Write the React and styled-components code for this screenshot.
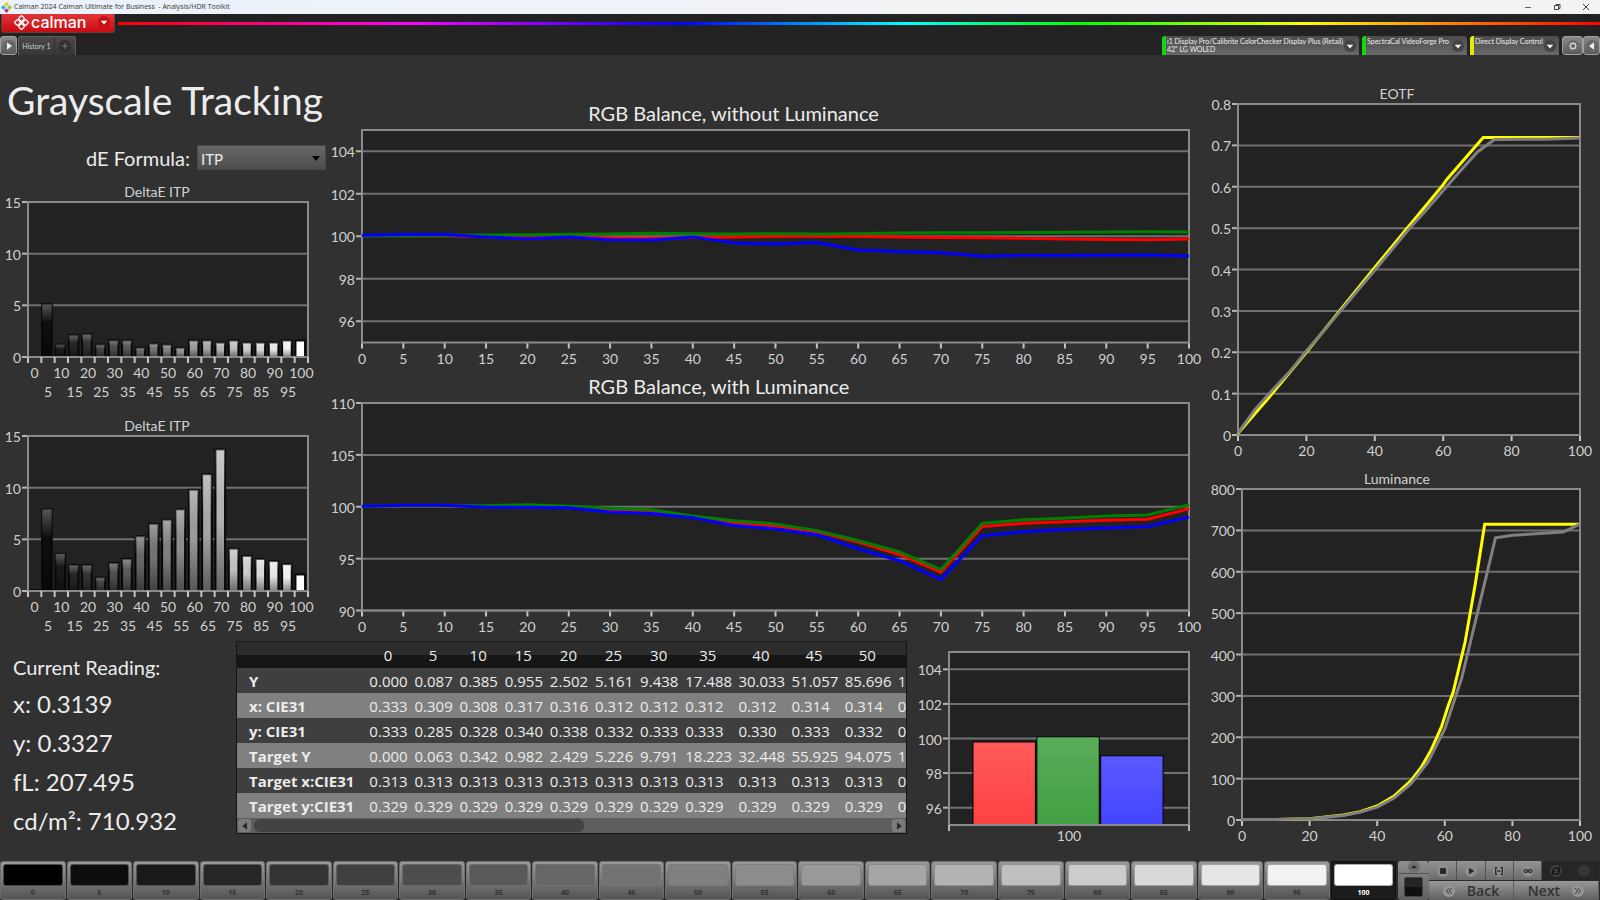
import React from "react";
import styled, { createGlobalStyle } from "styled-components";


const steps = Array.from({ length: 21 }, (_, i) => i * 5);

const deltaWithout = [0, 5.1, 1.2, 2.1, 2.2, 1.2, 1.6, 1.6, 0.9, 1.3, 1.2, 0.9, 1.6, 1.6, 1.4, 1.6, 1.4, 1.4, 1.4, 1.6, 1.6];
const deltaWith = [0.1, 7.9, 3.6, 2.5, 2.5, 1.3, 2.7, 3.1, 5.3, 6.5, 6.9, 7.9, 9.8, 11.3, 13.7, 4.1, 3.4, 3.1, 2.9, 2.6, 1.6];

const every5 = (values) => values.map((v, i) => [i * 5, v]);

const balanceWithout = [
  { color: "#ff0000", points: every5([100.03, 100.03, 100.03, 99.98, 99.96, 99.98, 99.92, 99.91, 99.94, 99.97, 100, 100, 99.99, 99.97, 99.94, 99.93, 99.9, 99.87, 99.85, 99.84, 99.87]) },
  { color: "#008000", points: every5([100.03, 100.04, 100.05, 100.06, 100.07, 100.09, 100.11, 100.14, 100.12, 100.11, 100.12, 100.11, 100.12, 100.15, 100.16, 100.17, 100.18, 100.19, 100.2, 100.21, 100.2]) },
  { color: "#0000ff", points: every5([100.05, 100.08, 100.08, 99.97, 99.88, 99.96, 99.83, 99.82, 99.97, 99.68, 99.64, 99.7, 99.35, 99.28, 99.22, 99.06, 99.1, 99.1, 99.11, 99.12, 99.07]) },
];

const balanceWith = [
  { color: "#ff0000", points: every5([100.03, 100.1, 100.1, 100, 100.05, 99.95, 99.65, 99.5, 99, 98.4, 98.15, 97.6, 96.6, 95.4, 93.7, 98.1, 98.4, 98.55, 98.7, 98.8, 99.8]) },
  { color: "#008000", points: every5([100.03, 100.1, 100.1, 100.1, 100.2, 100.05, 99.85, 99.7, 99.1, 98.65, 98.35, 97.7, 96.75, 95.65, 93.95, 98.4, 98.75, 98.9, 99.1, 99.2, 100.2]) },
  { color: "#0000ff", points: every5([100.05, 100.15, 100.15, 99.95, 99.95, 99.9, 99.5, 99.35, 98.95, 98.2, 97.85, 97.3, 95.95, 94.8, 93, 97.2, 97.6, 97.8, 97.95, 98.1, 99]) },
];

const eotf = [
  { color: "#ffff00", points: [[0, 0.004], [10, 0.1], [20, 0.2], [30, 0.303], [40, 0.405], [50, 0.505], [60, 0.605], [61, 0.617], [71.7, 0.719], [100, 0.719]] },
  { color: "#808080", points: [[0, 0.005], [5, 0.062], [10, 0.108], [15, 0.152], [20, 0.203], [25, 0.251], [30, 0.3], [40, 0.398], [50, 0.498], [55, 0.543], [60, 0.591], [65, 0.638], [70, 0.684], [75, 0.714], [90, 0.715], [100, 0.718]] },
];

const luminance = [
  { color: "#ffff00", points: [[0, 1], [10, 1], [20, 3], [30, 12], [35, 20], [40, 34], [45, 58], [50, 95], [53, 127], [56, 170], [59, 225], [61, 276], [62.5, 310], [66, 430], [69, 570], [71.8, 715], [100, 715]] },
  { color: "#808080", points: [[0, 1], [10, 1], [20, 3], [30, 11], [35, 19], [40, 31], [45, 53], [50, 88], [55, 140], [60, 220], [65, 343], [70, 512], [75, 682], [80, 688], [95, 696], [100, 715]] },
];

const tableHead = ["0", "5", "10", "15", "20", "25", "30", "35", "40", "45", "50", ""];
const tableRows = [
  ["Y", "0.000", "0.087", "0.385", "0.955", "2.502", "5.161", "9.438", "17.488", "30.033", "51.057", "85.696", "1"],
  ["x: CIE31", "0.333", "0.309", "0.308", "0.317", "0.316", "0.312", "0.312", "0.312", "0.312", "0.314", "0.314", "0"],
  ["y: CIE31", "0.333", "0.285", "0.328", "0.340", "0.338", "0.332", "0.333", "0.333", "0.330", "0.333", "0.332", "0"],
  ["Target Y", "0.000", "0.063", "0.342", "0.982", "2.429", "5.226", "9.791", "18.223", "32.448", "55.925", "94.075", "1"],
  ["Target x:CIE31", "0.313", "0.313", "0.313", "0.313", "0.313", "0.313", "0.313", "0.313", "0.313", "0.313", "0.313", "0"],
  ["Target y:CIE31", "0.329", "0.329", "0.329", "0.329", "0.329", "0.329", "0.329", "0.329", "0.329", "0.329", "0.329", "0"],
];

const pct = (v, [min, max]) => ((v - min) / (max - min)) * 100;

function Grid({ yTicks, yDomain }) {
  return (
    <>
      <rect width="100%" height="100%" fill="#222222" />
      {yTicks.map((t) => {
        const y = `${100 - pct(t, yDomain)}%`;
        return (
          <g key={t}>
            <line x1="0" x2="100%" y1={y} y2={y} stroke="#707070" strokeWidth="2" />
            <line x1="-6" x2="0" y1={y} y2={y} stroke="#b4b4b4" strokeWidth="2" />
            <AxisText x="-7" y={y} dy="6" textAnchor="end">{t}</AxisText>
          </g>
        );
      })}
    </>
  );
}

function Frame() {
  return <rect width="100%" height="100%" fill="none" stroke="#8a8a8a" strokeWidth="2" />;
}

function LineChart({ label, series, xTicks, yTicks, yDomain }) {
  return (
    <Plot role="img" aria-label={label}>
      <Grid yTicks={yTicks} yDomain={yDomain} />
      {xTicks.map((t) => (
        <svg key={t} x={`${t}%`} y="100%" overflow="visible">
          <line y2="6" stroke="#c4c4c4" strokeWidth="2" />
          <AxisText y="21" textAnchor="middle">{t}</AxisText>
        </svg>
      ))}
      <Frame />
      <svg width="100%" height="100%" viewBox="0 0 100 100" preserveAspectRatio="none" overflow="visible">
        {series.map((s) => (
          <Curve key={s.color} stroke={s.color} points={s.points.map(([x, y]) => `${x},${100 - pct(y, yDomain)}`).join(" ")} />
        ))}
      </svg>
    </Plot>
  );
}

function DeltaChart({ label, id, values }) {
  const slot = 100 / 21;
  return (
    <Plot role="img" aria-label={label}>
      <defs>
        <linearGradient id={id} x2="0" y2="1">
          <stop offset="0" stopColor="#ffffff" stopOpacity="0.3" />
          <stop offset="0.35" stopColor="#ffffff" stopOpacity="0" />
          <stop offset="0.5" stopColor="#000000" stopOpacity="0" />
          <stop offset="1" stopColor="#000000" stopOpacity="0.45" />
        </linearGradient>
      </defs>
      <Grid yTicks={[0, 5, 10, 15]} yDomain={[0, 15]} />
      {values.map((v, i) => {
        const h = pct(v, [0, 15]);
        const tone = Math.round((i / 20) * 255);
        const box = { x: `${i * slot + slot * 0.06}%`, y: `${100 - h}%`, width: `${slot * 0.72}%`, height: `${h}%` };
        return (
          <g key={i}>
            <rect {...box} fill={`rgb(${tone}, ${tone}, ${tone})`} stroke="#080808" strokeWidth="2" />
            {i < 20 && <rect {...box} fill={`url(#${id})`} />}
          </g>
        );
      })}
      <Frame />
      {steps.map((s, i) => (
        <svg key={s} x={`${i * slot}%`} y="100%" width={`${slot}%`} height="1" overflow="visible">
          <line y2="6" stroke="#c4c4c4" strokeWidth="2" />
          <AxisText x="50%" y={i % 2 ? "40" : "21"} textAnchor="middle">{s}</AxisText>
        </svg>
      ))}
      <svg x="100%" y="100%" overflow="visible">
        <line y2="6" stroke="#c4c4c4" strokeWidth="2" />
      </svg>
    </Plot>
  );
}

const rgbBars = [
  { id: "bar-red", from: "#ff5a5a", to: "#ff4141", value: 99.8 },
  { id: "bar-green", from: "#5aad5a", to: "#41a041", value: 100.1 },
  { id: "bar-blue", from: "#5a5aff", to: "#4444ff", value: 99 },
];

function RgbBars() {
  return (
    <Plot role="img" aria-label="RGB levels at 100">
      <Grid yTicks={[96, 98, 100, 102, 104]} yDomain={[95, 105]} />
      {rgbBars.map((b, i) => {
        const h = pct(b.value, [95, 105]);
        return (
          <g key={b.id}>
            <linearGradient id={b.id} x2="0" y2="1">
              <stop offset="0" stopColor={b.from} />
              <stop offset="1" stopColor={b.to} />
            </linearGradient>
            <rect x={`${10 + i * 26.6}%`} y={`${100 - h}%`} width="26%" height={`${h}%`} fill={`url(#${b.id})`} stroke="#000000" strokeWidth="1" />
          </g>
        );
      })}
      <Frame />
      <svg y="100%" width="100%" height="1" overflow="visible">
        <line y2="6" stroke="#b4b4b4" strokeWidth="2" />
        <AxisText x="50%" y="16" textAnchor="middle">100</AxisText>
      </svg>
      <svg x="100%" y="100%" overflow="visible">
        <line y2="6" stroke="#b4b4b4" strokeWidth="2" />
      </svg>
    </Plot>
  );
}

function AppIcon() {
  return (
    <svg width="11" height="11" viewBox="0 0 12 12" aria-hidden="true">
      <path d="M6 0l2.6 2.6L6 5.2 3.4 2.6z" fill="#f7c600" />
      <path d="M2.6 3.4L5.2 6 2.6 8.6 0 6z" fill="#20b4e8" />
      <path d="M9.4 3.4L12 6 9.4 8.6 6.8 6z" fill="#8ccf3c" />
      <path d="M6 6.8l2.6 2.6L6 12 3.4 9.4z" fill="#e5177b" />
    </svg>
  );
}

function BrandMark() {
  return (
    <svg width="15" height="15" viewBox="0 0 16 16" fill="none" stroke="#fff" strokeWidth="1.4" aria-hidden="true">
      <rect x="5.6" y="1.4" width="4.8" height="4.8" rx="1" transform="rotate(45 8 3.8)" />
      <rect x="5.6" y="9.8" width="4.8" height="4.8" rx="1" transform="rotate(45 8 12.2)" />
      <rect x="1.4" y="5.6" width="4.8" height="4.8" rx="1" transform="rotate(45 3.8 8)" />
      <rect x="9.8" y="5.6" width="4.8" height="4.8" rx="1" transform="rotate(45 12.2 8)" />
      <path d="M8 6l2 2-2 2-2-2z" fill="#fff" stroke="none" />
    </svg>
  );
}

const icons = {
  down: <path d="M2 4.500h8L6 9z" fill="currentColor" />,
  up: <path d="M2 7.500h8L6 3.500z" fill="currentColor" />,
  play: <path d="M3.500 2v8L10 6z" fill="currentColor" />,
  left: <path d="M8.500 1.500v9L2.500 6z" fill="currentColor" />,
  right: <path d="M3.500 1.500v9L9.500 6z" fill="currentColor" />,
  stop: <path d="M2.500 2.500h7v7h-7z" fill="currentColor" />,
  plus: <path d="M6 2.500v7M2.500 6h7" stroke="#8a8a8a" fill="none" />,
  bracket: <path d="M4 2H2v8h2M8 2h2v8H8M4 6h4" stroke="currentColor" strokeWidth="1.500" fill="none" />,
  loop: <path d="M6 6C5 4.200 1.200 3.500 1.200 6S5 7.800 6 6s4.800-2.500 4.800 0S7 7.800 6 6z" stroke="currentColor" strokeWidth="1.300" fill="none" />,
  refresh: <path d="M2 5.500a4 4 0 0 1 7-2l1-1v3H7M10 6.500a4 4 0 0 1-7 2l-1 1v-3h3" stroke="#151515" strokeWidth="1.500" fill="none" />,
  gear: (
    <g stroke="#d0d0d0" fill="none">
      <circle cx="6" cy="6" r="3.200" strokeWidth="1.500" />
      <path d="M6 .8v2M6 9.200v2M.8 6h2M9.200 6h2M2.300 2.300l1.400 1.400M8.300 8.300l1.400 1.400M2.300 9.700l1.400-1.400M8.300 3.700l1.400-1.400" />
    </g>
  ),
  back: <path d="M6 2.500L3 6l3 3.500M9.500 2.500L6.500 6l3 3.500" stroke="currentColor" fill="none" />,
  next: <path d="M2.500 2.500l3 3.500-3 3.500M6 2.500L9 6 6 9.500" stroke="currentColor" fill="none" />,
  none: null,
};

function Icon({ name }) {
  return <svg width="10" height="10" viewBox="0 0 12 12" aria-hidden="true">{icons[name]}</svg>;
}

function App() {
  return (
    <Page>
      <GlobalStyle />
      <TitleBar>
        <AppIcon />
        <TitleText>Calman 2024 Calman Ultimate for Business &nbsp;- Analysis/HDR Toolkit</TitleText>
        <WindowButton aria-label="Minimize"><svg width="8" height="8" viewBox="0 0 8 8"><path d="M1 4.500h6" stroke="#666" fill="none" /></svg></WindowButton>
        <WindowButton aria-label="Restore"><svg width="8" height="8" viewBox="0 0 8 8"><path d="M1.500 2.500h4v4h-4zM3 2.500v-1h4v4H5.500" stroke="#444" fill="none" /></svg></WindowButton>
        <WindowButton aria-label="Close"><svg width="8" height="8" viewBox="0 0 8 8"><path d="M1 1l6 6M7 1L1 7" stroke="#444" fill="none" /></svg></WindowButton>
      </TitleBar>

      <BrandRow>
        <BrandButton>
          <BrandMark />
          <BrandName>calman</BrandName>
          <Round $bg="#c40f14"><Icon name="down" /></Round>
        </BrandButton>
        <Rainbow />
      </BrandRow>

      <TabRow>
        <SquareButton aria-label="Open panel"><Round $bg="#666"><Icon name="right" /></Round></SquareButton>
        <HistoryTabs>
          <HistoryTab>History 1</HistoryTab>
          <AddTab aria-label="Add history"><Round $bg="#303030"><Icon name="plus" /></Round></AddTab>
        </HistoryTabs>
        <Spacer />
        <Device $accent="#12d812" $width="197px">
          <DeviceText>i1 Display Pro/Calibrite ColorChecker Display Plus (Retail)<br />42" LG WOLED</DeviceText>
          <Round $bg="#444"><Icon name="down" /></Round>
        </Device>
        <Device $accent="#12d812" $width="105px">
          <DeviceText>SpectraCal VideoForge Pro</DeviceText>
          <Round $bg="#444"><Icon name="down" /></Round>
        </Device>
        <Device $accent="#e8e800" $width="89px">
          <DeviceText>Direct Display Control</DeviceText>
          <Round $bg="#444"><Icon name="down" /></Round>
        </Device>
        <SquareButton $wide aria-label="Settings"><Round $bg="#666"><Icon name="gear" /></Round></SquareButton>
        <SquareButton aria-label="Collapse"><Round $bg="#666"><Icon name="left" /></Round></SquareButton>
      </TabRow>

      <Main>
        <Workspace>
          <Upper>
            <DeltaColumn>
              <Heading>Grayscale Tracking</Heading>
              <FormulaRow>
                <FormulaLabel htmlFor="formula">dE Formula:</FormulaLabel>
                <SelectWrap>
                  <Select id="formula" defaultValue="ITP"><option>ITP</option><option>2000</option></Select>
                  <SelectArrow width="8" height="5" viewBox="0 0 10 6"><path d="M0 0h10L5 6z" fill="#000" /></SelectArrow>
                </SelectWrap>
              </FormulaRow>
              <Chart>
                <ChartTitle>DeltaE ITP</ChartTitle>
                <PlotArea $margin="0 6px 43px 28px"><DeltaChart id="shine-a" label="DeltaE ITP" values={deltaWithout} /></PlotArea>
              </Chart>
              <Chart $top="17px">
                <ChartTitle>DeltaE ITP</ChartTitle>
                <PlotArea $margin="0 6px 43px 28px"><DeltaChart id="shine-b" label="DeltaE ITP" values={deltaWith} /></PlotArea>
              </Chart>
            </DeltaColumn>

            <BalanceColumn>
              <Chart>
                <BalanceTitle>RGB Balance, without Luminance</BalanceTitle>
                <PlotArea $margin="0 11px 26px 36px">
                  <LineChart label="RGB Balance, without Luminance" series={balanceWithout} xTicks={steps} yTicks={[96, 98, 100, 102, 104]} yDomain={[95, 105]} />
                </PlotArea>
              </Chart>
              <Chart>
                <BalanceTitle>RGB Balance, with Luminance</BalanceTitle>
                <PlotArea $margin="0 11px 31px 36px">
                  <LineChart label="RGB Balance, with Luminance" series={balanceWith} xTicks={steps} yTicks={[90, 95, 100, 105, 110]} yDomain={[90, 110]} />
                </PlotArea>
              </Chart>
            </BalanceColumn>
          </Upper>

          <Lower>
            <Readings>
              <ReadingTitle>Current Reading:</ReadingTitle>
              <Reading>x: 0.3139</Reading>
              <Reading>y: 0.3327</Reading>
              <Reading>fL: 207.495</Reading>
              <Reading>cd/m²: 710.932</Reading>
            </Readings>

            <TablePanel>
              <TableClip>
                <Table>
                  <colgroup>
                    <NameCol />
                    {tableHead.map((_, i) => <ValueCol key={i} $wide={i > 6} />)}
                  </colgroup>
                  <thead>
                    <tr>
                      <HeadCell aria-label="Measurement" />
                      {tableHead.map((h, i) => <HeadCell key={i}>{h}</HeadCell>)}
                    </tr>
                  </thead>
                  <tbody>
                    {tableRows.map(([name, ...cells]) => (
                      <Row key={name}>
                        <NameCell scope="row">{name}</NameCell>
                        {cells.map((c, i) => <Cell key={i}>{c}</Cell>)}
                      </Row>
                    ))}
                  </tbody>
                </Table>
              </TableClip>
              <Scrollbar>
                <ScrollButton aria-label="Scroll left"><Icon name="left" /></ScrollButton>
                <ScrollTrack><ScrollThumb /></ScrollTrack>
                <ScrollButton aria-label="Scroll right"><Icon name="right" /></ScrollButton>
              </Scrollbar>
            </TablePanel>

            <Chart>
              <PlotArea $margin="11px 11px 36px 36px"><RgbBars /></PlotArea>
            </Chart>
          </Lower>
        </Workspace>

        <CurveColumn>
          <Chart>
            <ChartTitle>EOTF</ChartTitle>
            <PlotArea $margin="0 8px 24px 32px">
              <LineChart label="EOTF" series={eotf} xTicks={[0, 20, 40, 60, 80, 100]} yTicks={[0, 0.1, 0.2, 0.3, 0.4, 0.5, 0.6, 0.7, 0.8]} yDomain={[0, 0.8]} />
            </PlotArea>
          </Chart>
          <Chart $top="11px">
            <ChartTitle>Luminance</ChartTitle>
            <PlotArea $margin="0 8px 24px 36px">
              <LineChart label="Luminance" series={luminance} xTicks={[0, 20, 40, 60, 80, 100]} yTicks={[0, 100, 200, 300, 400, 500, 600, 700, 800]} yDomain={[0, 800]} />
            </PlotArea>
          </Chart>
        </CurveColumn>
      </Main>

      <Footer>
        <Swatches>
          {steps.map((s) => {
            const tone = Math.round((s / 100) * 255);
            return (
              <Swatch key={s} $active={s === 100}>
                <SwatchColor style={{ background: `rgb(${tone}, ${tone}, ${tone})` }} />
                {s}
              </Swatch>
            );
          })}
        </Swatches>
        <PatternPicker>
          <PatternUp aria-label="More patterns"><Round $bg="#707070" $dark><Icon name="up" /></Round></PatternUp>
          <PatternColor aria-label="Pattern colour" />
        </PatternPicker>
        <Controls>
          <ControlRow>
            <Control aria-label="Stop"><Round $bg="#8e8e8e" $dark><Icon name="stop" /></Round></Control>
            <Control aria-label="Play"><Round $bg="#8e8e8e" $dark><Icon name="play" /></Round></Control>
            <Control aria-label="Read series"><Round $bg="#8e8e8e" $dark><Icon name="bracket" /></Round></Control>
            <Control aria-label="Read continuous"><Round $bg="#8e8e8e" $dark><Icon name="loop" /></Round></Control>
            <Control $off disabled aria-label="Refresh"><Round $bg="#404040" $dark><Icon name="refresh" /></Round></Control>
            <Control $off disabled aria-label="Record"><Round $bg="#363636" $dark><Icon name="none" /></Round></Control>
          </ControlRow>
          <ControlRow>
            <NavButton><Round $bg="#959595" $dark><Icon name="back" /></Round>Back</NavButton>
            <NavButton>Next<Round $bg="#959595" $dark><Icon name="next" /></Round></NavButton>
          </ControlRow>
        </Controls>
      </Footer>
    </Page>
  );
}

export default App;

const GlobalStyle = createGlobalStyle`
*{
box-sizing: border-box;
}
body{
margin: 0;
background: #313131;
}
button{
font-family: inherit;
border: 0;
padding: 0;
}
`

const Page = styled.div`
font-family: Lato, 'Open Sans', sans-serif;
color: #ececec;
background: #313131;
min-height: 100vh;
display: flex;
flex-direction: column;
`

const TitleBar = styled.header`
height: 14px;
display: flex;
align-items: center;
background: linear-gradient(90deg, #ebf2fb, #f2f3f5 60%, #f3f3f3);
padding-left: 1px;
`

const TitleText = styled.span`
font-family: 'Open Sans', sans-serif;
font-size: 7px;
line-height: 14px;
color: #333333;
flex: 1;
padding-left: 2px;
`

const WindowButton = styled.button`
width: 29px;
height: 14px;
display: flex;
align-items: center;
justify-content: center;
background: transparent;
`

const BrandRow = styled.div`
height: 20px;
background: #222222;
display: flex;
padding-left: 1px;
`

const BrandButton = styled.button`
width: 114px;
height: 19px;
display: flex;
align-items: center;
padding: 0 4px 2px 12px;
gap: 2px;
color: #ffffff;
background: linear-gradient(#e0343a, #c90c12);
border: 1px solid #6d3b3d;
border-top: 0;
border-radius: 0 0 3px 3px;
`

const BrandName = styled.span`
font-family: Inter, sans-serif;
font-size: 16px;
line-height: 16px;
font-weight: 500;
flex: 1;
text-align: left;
`

const Round = styled.span`
width: 12px;
height: 12px;
flex: none;
border-radius: 50%;
display: flex;
align-items: center;
justify-content: center;
background: ${(p) => p.$bg};
color: ${(p) => (p.$dark ? "#262626" : "#f2f2f2")};
`

const Rainbow = styled.div`
flex: 1;
height: 3px;
margin: 8px 0 0 3px;
background: linear-gradient(90deg, #ff0000, #ff00ff 20%, #0000ff 38%, #00ffff 53%, #00ff00 65%, #ffff00 80%, #ff0000);
`

const TabRow = styled.div`
height: 21px;
background: #222222;
display: flex;
align-items: flex-end;
padding-top: 2px;
`

const SquareButton = styled.button`
width: ${(p) => (p.$wide ? "21px" : "17px")};
height: 19px;
display: flex;
align-items: center;
justify-content: center;
background: linear-gradient(#8a8a8a, #5a5a5a);
border: 1px solid #a0a0a0;
border-radius: 3px;
`

const HistoryTabs = styled.div`
display: flex;
height: 19px;
margin-left: 1px;
background: linear-gradient(#4a4a4a, #363636);
border: 1px solid #5e5e5e;
border-bottom: 0;
border-radius: 3px 3px 0 0;
`

const HistoryTab = styled.button`
width: 36px;
color: #d0d0d0;
font-size: 7px;
background: transparent;
border-right: 1px solid #303030;
`

const AddTab = styled.button`
width: 20px;
display: flex;
align-items: center;
justify-content: center;
background: transparent;
`

const Spacer = styled.div`
flex: 1;
`

const Device = styled.button`
width: ${(p) => p.$width};
height: 19px;
margin-right: 3px;
display: flex;
align-items: center;
justify-content: space-between;
padding-right: 3px;
color: #f0f0f0;
background: linear-gradient(#4c4c4c, #686868);
border-left: 4px solid ${(p) => p.$accent};
border-radius: 3px 3px 0 0;
`

const DeviceText = styled.span`
align-self: flex-start;
font-size: 7px;
line-height: 8px;
padding: 1px 0 0 1px;
text-align: left;
white-space: nowrap;
`

const Main = styled.main`
flex: 1;
display: grid;
grid-template-columns: minmax(0, 3fr) minmax(0, 1fr);
`

const Workspace = styled.div`
display: flex;
flex-direction: column;
`

const Upper = styled.div`
flex: 1;
display: grid;
grid-template-columns: 326px minmax(0, 1fr);
`

const DeltaColumn = styled.section`
display: flex;
flex-direction: column;
padding: 20px 12px 7px 0;
`

const Heading = styled.h1`
font-weight: 400;
font-size: 39px;
line-height: 50px;
margin: 0;
padding-left: 7px;
white-space: nowrap;
`

const FormulaRow = styled.div`
display: flex;
align-items: center;
justify-content: flex-end;
gap: 7px;
margin: 20px -12px 13px 0;
`

const FormulaLabel = styled.label`
font-size: 20px;
line-height: 24px;
`

const SelectWrap = styled.div`
position: relative;
width: 129px;
`

const Select = styled.select`
display: block;
width: 100%;
height: 25px;
appearance: none;
border: 1px solid #484848;
background: linear-gradient(#686868, #4c4c4c);
color: #ececec;
font-family: inherit;
font-size: 15px;
padding: 2px 3px 0 3px;
`

const SelectArrow = styled.svg`
position: absolute;
right: 6px;
top: 11px;
pointer-events: none;
`

const Chart = styled.div`
flex: 1 1 0;
display: flex;
flex-direction: column;
margin-top: ${(p) => p.$top || 0};
`

const ChartTitle = styled.h2`
font-weight: 400;
font-size: 14px;
line-height: 17px;
margin: 0 0 2px;
text-align: center;
color: #d2d2d2;
`

const PlotArea = styled.div`
flex: 1;
display: grid;
grid-template-rows: minmax(100px, 1fr);
margin: ${(p) => p.$margin};
`

const Plot = styled.svg`
display: block;
width: 100%;
height: 100%;
min-height: 0;
overflow: visible;
`

const AxisText = styled.text`
font-size: 14px;
fill: #d0d0d0;
`

const Curve = styled.polyline`
fill: none;
stroke-width: 3px;
vector-effect: non-scaling-stroke;
`

const BalanceColumn = styled.section`
display: flex;
flex-direction: column;
padding-top: 41px;
`

const BalanceTitle = styled.h2`
font-weight: 400;
font-size: 20px;
line-height: 34px;
margin: 0;
padding-left: 30%;
`

const Lower = styled.div`
display: grid;
grid-template-columns: 236px minmax(0, 1fr) 287px;
`

const Readings = styled.section`
padding: 10px 0 0 13px;
`

const ReadingTitle = styled.h2`
font-weight: 400;
font-size: 20px;
line-height: 33px;
margin: 0;
`

const Reading = styled.p`
font-size: 24px;
line-height: 39px;
margin: 0;
`

const TablePanel = styled.section`
align-self: start;
margin: 0 6px 27px 0;
border: 1px solid #161616;
font-family: 'Open Sans', sans-serif;
`

const TableClip = styled.div`
overflow: hidden;
`

const Table = styled.table`
table-layout: fixed;
width: 710px;
border-collapse: collapse;
font-size: 15px;
`

const NameCol = styled.col`
width: 128px;
`

const ValueCol = styled.col`
width: ${(p) => (p.$wide ? "53px" : "45px")};
`

const HeadCell = styled.th`
height: 26px;
padding: 0;
font-weight: 400;
background: linear-gradient(#2c2c2c 50%, #161616 50%);
`

const Row = styled.tr`
height: 25px;
background: #3f3f3f;
&:nth-child(even){
background: #808080;
}
`

const NameCell = styled.th`
padding: 0 0 0 12px;
line-height: 24px;
font-weight: 700;
text-align: left;
white-space: nowrap;
`

const Cell = styled.td`
padding: 0 0 0 4px;
line-height: 24px;
`

const Scrollbar = styled.div`
display: flex;
align-items: center;
height: 15px;
padding: 0 1px;
background: #5e5e5e;
`

const ScrollButton = styled.button`
width: 13px;
height: 13px;
display: flex;
align-items: center;
justify-content: center;
background: #7c7c7c;
color: #2c2c2c;
border-radius: 3px;
`

const ScrollTrack = styled.div`
flex: 1;
padding: 0 3px;
`

const ScrollThumb = styled.div`
width: 52%;
height: 13px;
border-radius: 6px;
background: #434343;
`

const CurveColumn = styled.section`
display: flex;
flex-direction: column;
padding: 30px 12px 17px 6px;
`

const Footer = styled.footer`
display: flex;
height: 39px;
background: #2b2b2b;
`

const Swatches = styled.div`
flex: 1;
display: flex;
`

const Swatch = styled.button`
flex: 1;
margin-right: 1px;
display: flex;
flex-direction: column;
padding: 2px 2px 0 2px;
align-items: stretch;
font-family: 'Open Sans', sans-serif;
font-weight: 700;
font-size: 7px;
line-height: 13px;
color: ${(p) => (p.$active ? "#ffffff" : "#303030")};
background: ${(p) => (p.$active ? "#1c1c1c" : "linear-gradient(#9a9a9a, #545454)")};
border: 1px solid ${(p) => (p.$active ? "#111111" : "#6e6e6e")};
border-radius: 3px;
`

const SwatchColor = styled.span`
height: 24px;
border: 1px solid rgba(120, 120, 120, 0.6);
border-radius: 3px;
`

const PatternPicker = styled.div`
width: 31px;
margin-left: 1px;
display: flex;
flex-direction: column;
align-items: center;
background: linear-gradient(#8e8e8e, #606060);
border-radius: 3px;
`

const PatternUp = styled.button`
width: 100%;
height: 13px;
display: flex;
justify-content: center;
background: transparent;
border-bottom: 1px solid #555555;
`

const PatternColor = styled.button`
width: 19px;
height: 20px;
margin-top: 3px;
background: linear-gradient(#242424 50%, #101010 50%);
border: 1px solid #444444;
border-radius: 2px;
`

const Controls = styled.div`
width: 171px;
padding-right: 1px;
display: flex;
flex-direction: column;
gap: 1px;
`

const ControlRow = styled.div`
flex: 1;
display: flex;
`

const Control = styled.button`
flex: 1;
display: flex;
align-items: center;
justify-content: center;
background: ${(p) => (p.$off ? "#262626" : "linear-gradient(#949494, #6a6a6a)")};
border-right: 1px solid ${(p) => (p.$off ? "#262626" : "#505050")};
`

const NavButton = styled.button`
flex: 1;
display: flex;
align-items: center;
justify-content: center;
gap: 12px;
font-family: 'Open Sans', sans-serif;
font-size: 14px;
line-height: 18px;
font-weight: 600;
color: #333333;
background: linear-gradient(#989898, #606060);
border-right: 1px solid #606060;
`
